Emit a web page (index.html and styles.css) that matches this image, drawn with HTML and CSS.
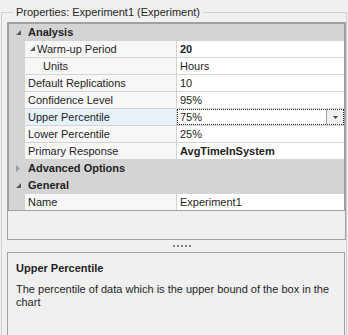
FILE: index.html
```html
<!DOCTYPE html>
<html>
<head>
<meta charset="utf-8">
<link rel="stylesheet" href="styles.css">
</head>
<body>
<fieldset class="group">
  <legend class="group-title">Properties: Experiment1 (Experiment)</legend>
  <div class="panel">
    <div class="grid">
      <div class="row cat">
        <span class="gutter"><svg class="exp" width="5" height="5" viewBox="0 0 5 5"><polygon points="5,0 5,5 0,5"/></svg></span>
        <span class="cat-name">Analysis</span>
      </div>
      <div class="row">
        <span class="gutter"></span>
        <span class="name lvl1"><svg class="exp" width="5" height="5" viewBox="0 0 5 5"><polygon points="5,0 5,5 0,5"/></svg>Warm-up Period</span>
        <span class="val bold">20</span>
      </div>
      <div class="row">
        <span class="gutter"></span>
        <span class="name lvl2">Units</span>
        <span class="val">Hours</span>
      </div>
      <div class="row">
        <span class="gutter"></span>
        <span class="name">Default Replications</span>
        <span class="val">10</span>
      </div>
      <div class="row">
        <span class="gutter"></span>
        <span class="name">Confidence Level</span>
        <span class="val">95%</span>
      </div>
      <div class="row selected">
        <span class="gutter"></span>
        <span class="name">Upper Percentile</span>
        <span class="val focus"><span class="val-text">75%</span><span class="drop"><svg width="5" height="3" viewBox="0 0 5 3"><polygon points="0,0 5,0 2.5,3"/></svg></span></span>
      </div>
      <div class="row">
        <span class="gutter"></span>
        <span class="name">Lower Percentile</span>
        <span class="val">25%</span>
      </div>
      <div class="row">
        <span class="gutter"></span>
        <span class="name">Primary Response</span>
        <span class="val bold">AvgTimeInSystem</span>
      </div>
      <div class="row cat">
        <span class="gutter"><svg class="col" width="4" height="7" viewBox="0 0 4 7"><polygon points="0,0 4,3.5 0,7"/></svg></span>
        <span class="cat-name">Advanced Options</span>
      </div>
      <div class="row cat">
        <span class="gutter"><svg class="exp" width="5" height="5" viewBox="0 0 5 5"><polygon points="5,0 5,5 0,5"/></svg></span>
        <span class="cat-name">General</span>
      </div>
      <div class="row last">
        <span class="gutter"></span>
        <span class="name">Name</span>
        <span class="val">Experiment1</span>
      </div>
    </div>
  </div>
  <div class="splitter"><span class="dot"></span><span class="dot"></span><span class="dot"></span><span class="dot"></span><span class="dot"></span></div>
  <div class="desc">
    <div class="desc-title">Upper Percentile</div>
    <div class="desc-text">The percentile of data which is the upper bound of the box in the chart</div>
  </div>
</fieldset>
</body>
</html>
```

FILE: styles.css
```css
html, body {
  margin: 0;
  padding: 0;
  background: #f0f0f0;
  overflow: hidden;
}
body {
  font-family: "Liberation Sans", Arial, sans-serif;
  font-size: 11px;
  color: #1e1e1e;
  width: 348px;
  height: 335px;
}
.group {
  margin: 5px 1px 0 1px;
  padding: 3px 0 0 5px;
  border: 1px solid #d0d0d0;
  border-bottom: none;
  min-width: 0;
}
.group-title {
  margin-left: 6px;
  padding: 0 3px;
  line-height: 14px;
  font-size: 11px;
  color: #262626;
}
.panel {
  height: 218px;
  box-sizing: border-box;
  border: 1px solid #a0a0a0;
  background: #f0f0f0;
}
.grid {
  border: 1px solid #a0a0a0;
  background: #d4d4d4;
}
.row {
  display: flex;
  height: 16px;
  border-bottom: 1px solid #d4d4d4;
  line-height: 16px;
}
.row.last {
  border-bottom: none;
}
.gutter {
  width: 16px;
  flex: none;
  display: flex;
  align-items: center;
  justify-content: flex-start;
}
.cat .gutter {
  padding-left: 7px;
  width: 9px;
}
.exp polygon { fill: #5a5a5a; }
.col polygon { fill: #9c9c9c; }
.cat-name {
  font-weight: bold;
  padding-left: 3px;
}
.name {
  width: 148px;
  flex: none;
  padding-left: 3px;
  background: #f7f7f7;
  border-right: 1px solid #d4d4d4;
  white-space: nowrap;
  display: flex;
  align-items: center;
}
.name.lvl1 { padding-left: 5px; width: 146px; }
.name.lvl1 .exp { margin-right: 2px; margin-top: -2px; }
.name.lvl2 { padding-left: 18px; width: 133px; }
.selected .name { background: #e5f1fb; }
.val {
  flex: 1;
  background: #ffffff;
  padding-left: 3px;
  white-space: nowrap;
}
.bold { font-weight: bold; }
.val.focus {
  display: flex;
  padding-left: 2px;
  border: 1px dotted #2a2a2a;
  line-height: 14px;
  height: 14px;
}
.val-text { flex: 1; }
.drop {
  width: 16px;
  flex: none;
  background: #f0f0f0;
  border-left: 1px solid #a0a0a0;
  display: flex;
  align-items: center;
  justify-content: center;
}
.drop polygon { fill: #4a4a4a; }
.splitter {
  height: 12px;
  display: flex;
  align-items: center;
  justify-content: center;
  gap: 2px;
  padding-left: 11px;
}
.dot {
  width: 2px;
  height: 2px;
  background: #808080;
}
.desc {
  height: 84px;
  box-sizing: border-box;
  border: 1px solid #a0a0a0;
  border-bottom: none;
  padding: 8px 8px 0 8px;
  margin-right: 1px;
}
.desc-title {
  font-weight: bold;
  line-height: 14px;
  margin-bottom: 8px;
}
.desc-text {
  line-height: 13px;
}
```
